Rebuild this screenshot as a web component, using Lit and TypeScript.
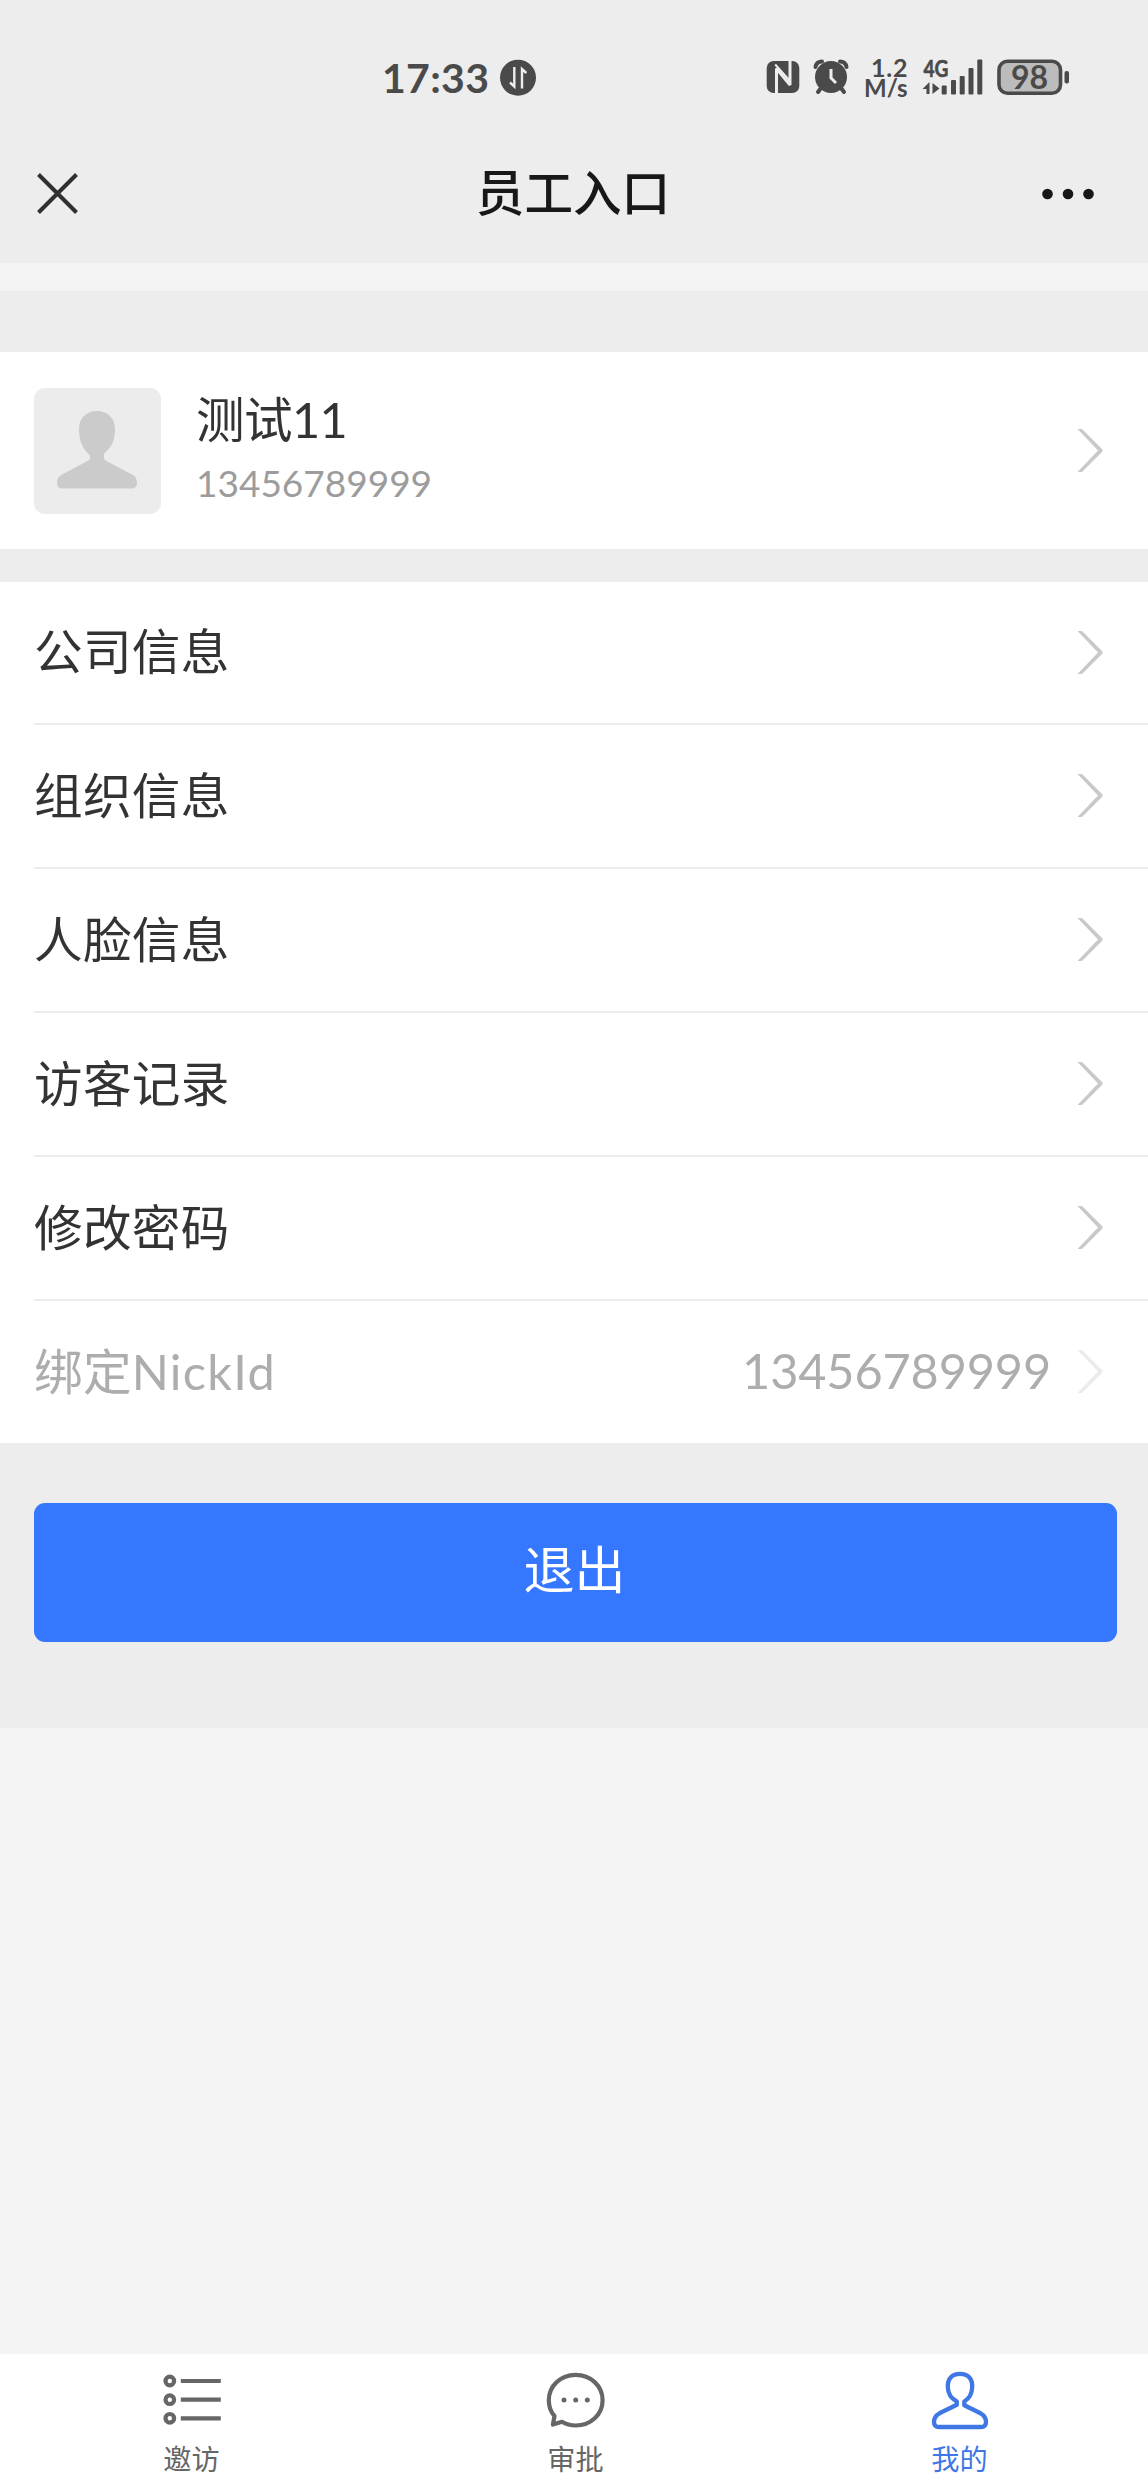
import { LitElement, html, css, svg } from "lit";
import { customElement } from "lit/decorators.js";

const chevron = html`<svg class="chevron" width="26" height="46" viewBox="0 0 26 46">
  <path d="M0.500 1h4.500L25.500 21.500v2L5 44H0.500L21 22.500z" fill="currentColor" />
</svg>`;

const tabIcons: Record<string, unknown> = {
  list: html`<svg width="60" height="60" viewBox="0 0 60 60" fill="none" stroke="currentColor" stroke-width="4.200">
    ${[11, 29.7, 48.3].map((y) => svg`<circle cx="7.800" cy=${y} r="4.300" /><path d=${`M18.800 ${y}h40`} />`)}
  </svg>`,
  chat: html`<svg width="60" height="60" viewBox="0 0 60 60">
    <path d="M8.500 46C4.500 41.500 2.800 36 2.800 30.200C2.800 15.800 14.800 4.900 29.700 4.900S56.600 15.800 56.600 30.200S44.600 55.500 29.700 55.500C24.500 55.500 20 54.300 16 51.800L6.900 54.600z"
      fill="none" stroke="currentColor" stroke-width="4.200" stroke-linejoin="round" />
    <g fill="currentColor"><circle cx="18" cy="30" r="2.500" /><circle cx="29.700" cy="30" r="2.500" /><circle cx="41.300" cy="30" r="2.500" /></g>
  </svg>`,
  user: html`<svg width="60" height="60" viewBox="0 0 60 60">
    <path d="M26.800 31.500C21 28.500 18 23.500 17.800 17C17.600 8.500 22 3.900 30 3.900S42.500 8.500 42.200 17C42 23.500 39.200 28.500 34.300 31.500V35.300L50.500 43.300C54.500 45.500 56 48 56 52C56 55.300 54.300 57 51 57H9C5.700 57 4 55.300 4 52C4 48 5.500 45.500 9.500 43.300L26.800 34.800Z"
      fill="none" stroke="currentColor" stroke-width="4.300" stroke-linejoin="round" />
  </svg>`,
};

@customElement("app-root")
export class AppRoot extends LitElement {
  static styles = css`
    :host {
      display: flex;
      flex-direction: column;
      width: 1148px;
      height: 2492px;
      box-sizing: border-box;
      background: #f4f4f4;
      color: #333;
      font-family: Lato, "Noto Sans CJK SC", sans-serif;
      font-size: 48.600px;
      overflow: hidden;
    }
    svg { display: block; flex: none; }
    .top { background: #ededed; height: 263px; flex: none; }
    .status { display: flex; height: 130px; padding: 0 77px 0 380px; justify-content: space-between; color: #4a4a4a; }
    .nav { display: grid; grid-template-columns: 200px 1fr 200px; align-items: center; height: 127px; color: #181818; }
    .nav .close { margin-left: 36px; }
    .nav .more { margin-left: 92px; }
    .nav h1 { margin: 0; padding: 0 2px 3px 0; font-size: 48.600px; line-height: 60px; font-weight: 500; text-align: center; }
    .page { background: #ededed; margin-top: 28px; padding-top: 61px; height: 1376px; flex: none; }
    .profile { display: flex; align-items: center; height: 197px; box-sizing: border-box; padding: 0 45px 0 34px; background: #fff; }
    .avatar { background: #ececec; border-radius: 11px; width: 127px; height: 126px; }
    .who { flex: 1; margin-left: 35px; padding-bottom: 6px; }
    .name { line-height: 70px; letter-spacing: -0.600px; }
    .phone { line-height: 58px; font-size: 37px; color: #9c9c9c; }
    .chevron { color: #c9c9c9; }
    .list { margin-top: 33px; background: #fff; padding-left: 34px; }
    .row { display: flex; align-items: center; height: 144px; box-sizing: border-box; padding-right: 45px; border-bottom: 2px solid #ececec; }
    .row:first-child { height: 143px; }
    .row:last-child { height: 142px; border-bottom: 0; color: #adadad; }
    .row:last-child .chevron { color: #ebebeb; }
    .label { flex: 1; padding-bottom: 7px; letter-spacing: 0.300px; }
    .label .latin { letter-spacing: 1.300px; }
    .value { margin-right: 26px; padding-bottom: 5px; letter-spacing: -0.100px; }
    .logout { display: block; margin: 60px 31px 0 34px; width: 1083px; height: 139px; border: 0; border-radius: 11px; padding: 0 2px 11px 0; background: #3577ff; color: #fff; font: inherit; font-size: 51px; }
    .tabs { display: grid; grid-template-columns: 383px 385px 383px; height: 138px; margin-top: auto; background: #fff; color: #666; }
    .tab { display: flex; flex-direction: column; align-items: center; padding-top: 16px; font-size: 28.200px; line-height: 40px; gap: 9px; }
    .tab.active { color: #3f78e4; }
  `;

  private rows = [
    { label: "公司信息" },
    { label: "组织信息" },
    { label: "人脸信息" },
    { label: "访客记录" },
    { label: "修改密码" },
    { label: "绑定", latin: "NickId", value: "13456789999" },
  ];

  private tabs = [
    { icon: "list", label: "邀访" },
    { icon: "chat", label: "审批" },
    { icon: "user", label: "我的", active: true },
  ];

  private renderStatus() {
    return html`<div class="status">
      <svg width="160" height="130" viewBox="380 0 160 130" fill="currentColor">
        <text x="382" y="92.500" font-size="41" font-weight="700" textLength="107">17:33</text>
        <circle cx="518" cy="77.700" r="18" />
        <path d="M514.300 67V86.500L510 82.500M522 88.500V69L526.300 73" fill="none" stroke="#ededed" stroke-width="2.400" />
      </svg>
      <svg width="309" height="130" viewBox="762 0 309 130" fill="currentColor">
        <rect x="766.700" y="61" width="32.600" height="32" rx="7" />
        <path d="M776.500 93V68.500L790 85V61" fill="none" stroke="#ededed" stroke-width="3" stroke-linejoin="bevel" />
        <path d="M775.200 64.500L781 71L790 81" fill="none" stroke="#ededed" stroke-width="2" />
        <circle cx="831" cy="77" r="16" />
        <g fill="none" stroke="currentColor" stroke-width="4" stroke-linecap="round">
          <path d="M815.500 67Q816.500 61.500 822 61.500M840 61.500Q845.500 61.500 846.500 67M821 88L818 92M841 88L844 92" />
        </g>
        <path d="M831 69V78L836 83" fill="none" stroke="#ededed" stroke-width="3" />
        <g font-weight="700">
          <text><tspan x="871" y="77" font-size="25" letter-spacing="0.800">1.2</tspan><tspan x="864" y="97" font-size="24" letter-spacing="0">M/s</tspan></text>
          <text x="923.500" y="77" font-size="23.500" textLength="25" lengthAdjust="spacingAndGlyphs" stroke="currentColor" stroke-width="0.600">4G</text>
        </g>
        <path d="M929.500 94V82L922.500 89H926.500V94zM932.500 83V94L939.500 88.500z" />
        <rect x="941.700" y="85.500" width="5" height="9" rx="1" />
        <rect x="951" y="80" width="5" height="14.500" rx="1" />
        <rect x="959.700" y="76" width="5" height="18.500" rx="1" />
        <rect x="968.500" y="68" width="5" height="26.500" rx="1" />
        <rect x="977.300" y="59.500" width="5" height="35" rx="1" />
        <rect x="999" y="61.300" width="61.500" height="32" rx="8.500" fill="#bcbcbc" stroke="currentColor" stroke-width="3.600" />
        <rect x="1064.500" y="71" width="4.500" height="12.500" rx="2" />
        <text x="1011" y="88.700" font-size="32" font-weight="700" textLength="37">98</text>
      </svg>
    </div>`;
  }

  render() {
    return html`
      <header class="top">
        ${this.renderStatus()}
        <div class="nav">
          <svg class="close" width="43" height="43" viewBox="0 0 43 43">
            <path d="M2.500 2.500L40.500 40.500M40.500 2.500L2.500 40.500" stroke="#303030" stroke-width="4" />
          </svg>
          <h1>员工入口</h1>
          <svg class="more" width="54" height="12" viewBox="0 0 54 12" fill="currentColor">
            <circle cx="7.500" cy="6" r="5.300" /><circle cx="28" cy="6" r="5.300" /><circle cx="48.500" cy="6" r="5.300" />
          </svg>
        </div>
      </header>
      <main class="page">
        <section class="profile">
          <svg class="avatar" viewBox="0 0 127 126">
            <path d="M63 23C73.500 23 81 30 81 41C81 53 77.500 59 71 64.500C69.500 66 69.500 71 71.500 72.500L98 86.500C101.500 88.500 103 91 103 94.500C103 98.500 101 100.500 97 100.500H29C25 100.500 23 98.500 23 94.500C23 91 24.500 88.500 28 86.500L54.500 72.500C56.500 71 56.500 68 55 66.500C48.500 60 45 53 45 41C45 30 52.500 23 63 23z" fill="#cbcbcb" />
          </svg>
          <div class="who">
            <div class="name">测试11</div>
            <div class="phone">13456789999</div>
          </div>
          ${chevron}
        </section>
        <section class="list">
          ${this.rows.map((r) => html`<div class="row">
            <span class="label">${r.label}${r.latin ? html`<span class="latin">${r.latin}</span>` : ""}</span>
            ${r.value ? html`<span class="value">${r.value}</span>` : ""}
            ${chevron}
          </div>`)}
        </section>
        <button class="logout">退出</button>
      </main>
      <nav class="tabs">
        ${this.tabs.map((t) => html`<div class="tab ${t.active ? "active" : ""}">
          ${tabIcons[t.icon]}<span>${t.label}</span>
        </div>`)}
      </nav>
    `;
  }
}
